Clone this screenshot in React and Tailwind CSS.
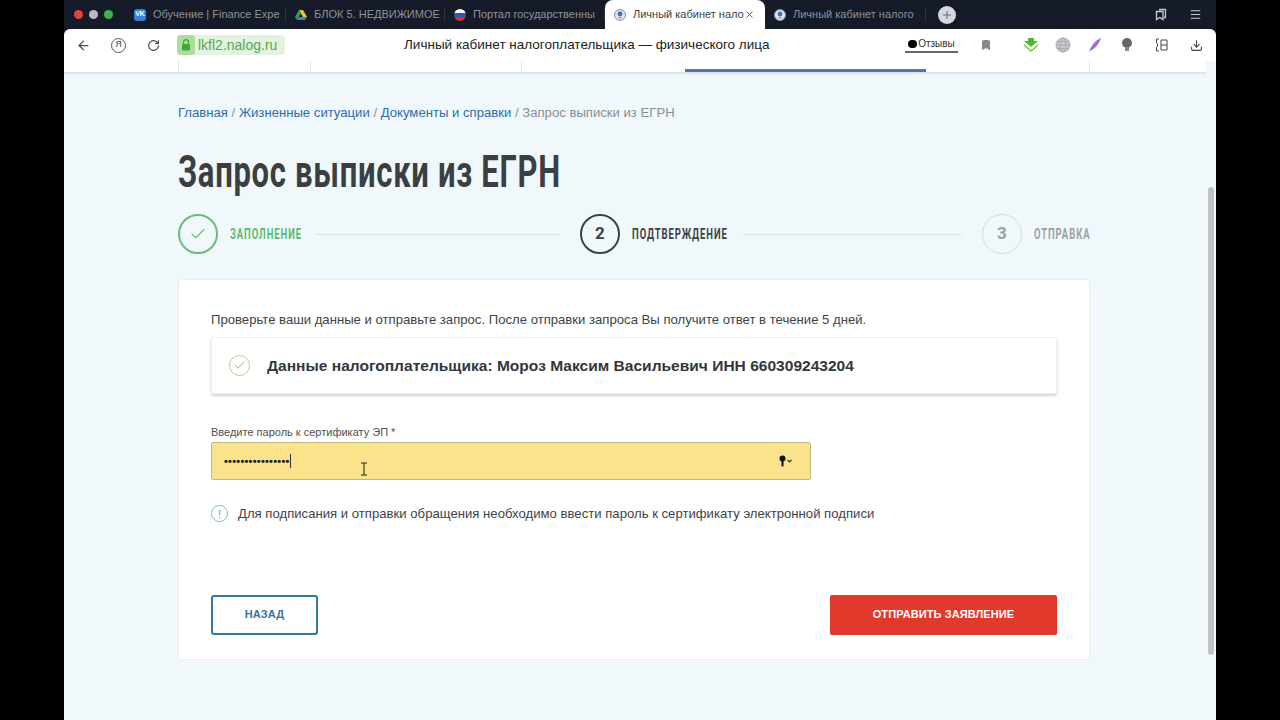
import React from 'react';
import { ArrowLeft, RotateCw, X, Plus, Bookmark, Menu, Download, Check } from 'lucide-react';

const SANS = { fontFamily: '"Liberation Sans", Arial, sans-serif' };
const COND = { fontFamily: 'Roboto, sans-serif' };

const Tab = ({ icon, title, width }) => (
  <div className={`flex items-center h-full ${width} shrink-0 pl-[9px]`}>
    {icon}
    <span className="ml-[7px] text-[11px] text-[#8d939c] whitespace-nowrap flex-1">{title}</span>
    <span className="w-px h-[14px] bg-[#2c3443]" />
  </div>
);

const NalogIcon = () => (
  <svg width="12" height="12" viewBox="0 0 12 12" className="shrink-0">
    <circle cx="6" cy="6" r="5.5" fill="#dfe6f2" stroke="#7d8fb8" />
    <circle cx="6" cy="5" r="2.4" fill="#4a6fa8" />
    <path d="M3.6 8 L6 10 L8.4 8 Z" fill="#c8a24a" />
  </svg>
);

const Step = ({ children, label, labelClass, line }) => (
  <div className="flex items-center">
    {children}
    <span className={`ml-[12px] text-[15px] font-bold whitespace-nowrap origin-left scale-x-[.63] tracking-[1.5px] ${labelClass}`} style={COND}>{label}</span>
    {line && <div className="flex-1 h-px bg-[#dbe3e8] ml-[15px] mr-[20px]" />}
  </div>
);

const App = () => {
  return (
    <div className="w-[1280px] h-[720px] bg-black overflow-hidden flex justify-center" style={SANS}>
      <div className="w-[1152px] h-full flex flex-col bg-[#f0f8fb]">
        {/* Tabs */}
        <div className="h-[29px] bg-[#151b28] flex items-center shrink-0">
          <div className="flex items-center gap-[6px] pl-[10px] w-[61px] shrink-0">
            <span className="w-[9px] h-[9px] rounded-full bg-[#e0453c]" />
            <span className="w-[9px] h-[9px] rounded-full bg-[#b9bcc2]" />
            <span className="w-[9px] h-[9px] rounded-full bg-[#3fb24a]" />
          </div>
          <Tab
            width="w-[161px]"
            title="Обучение | Finance Expe"
            icon={<span className="w-[12px] h-[12px] rounded-[3px] bg-[#3b7fd9] text-white text-[7px] font-bold flex items-center justify-center shrink-0">VK</span>}
          />
          <Tab
            width="w-[159px]"
            title="БЛОК 5. НЕДВИЖИМОЕ"
            icon={
              <svg width="12" height="12" viewBox="0 0 12 12" className="shrink-0">
                <path d="M4 1h4l4 7H8z" fill="#f4c430" />
                <path d="M4 1L0 8l2 3 4-7z" fill="#2f9e57" />
                <path d="M2 11h8l2-3H4z" fill="#3b7fd9" />
              </svg>
            }
          />
          <Tab
            width="w-[160px]"
            title="Портал государственны"
            icon={
              <span className="w-[12px] h-[12px] rounded-full overflow-hidden flex flex-col shrink-0">
                <span className="h-[4px] bg-white" />
                <span className="h-[4px] bg-[#2f55b5]" />
                <span className="h-[4px] bg-[#d6322c]" />
              </span>
            }
          />
          <div className="w-[160px] h-full bg-white rounded-t-[8px] flex items-center pl-[9px] pr-[8px] shrink-0">
            <NalogIcon />
            <span className="ml-[7px] text-[11px] text-[#3a3f47] whitespace-nowrap flex-1">Личный кабинет нало</span>
            <X size={11} className="text-[#555] shrink-0 mr-[2px]" />
          </div>
          <Tab width="w-[161px]" title="Личный кабинет налого" icon={<NalogIcon />} />
          <span className="w-[18px] h-[18px] rounded-full bg-[#d5d9df] flex items-center justify-center ml-[12px] shrink-0">
            <Plus size={12} className="text-[#5f6670]" />
          </span>
          <div className="ml-auto flex items-center gap-[22px] pr-[14px] text-[#c9ced6]">
            <svg width="12" height="13" viewBox="0 0 12 13" fill="none" stroke="currentColor" strokeWidth="1.3">
              <path d="M4 1.5h6.5v8H9M1.5 3.5h6.5v8l-3.2-2-3.3 2z" />
            </svg>
            <Menu size={13} />
          </div>
        </div>

        {/* Toolbar */}
        <div className="bg-[#151b28] shrink-0 relative z-10">
          <div className="h-[32px] bg-white rounded-t-[6px] flex items-center">
            <ArrowLeft size={15} className="ml-[12px] text-[#4a4a4a] shrink-0" />
            <span className="ml-[20px] w-[15px] h-[15px] rounded-full border border-[#555] text-[9px] text-[#444] flex items-center justify-center shrink-0">Я</span>
            <RotateCw size={13} className="ml-[21px] text-[#444] shrink-0" />
            <div className="ml-[17px] h-[20px] w-[108px] rounded-[4px] bg-[#e4f3e0] flex items-center shrink-0">
              <span className="w-[18px] h-[20px] rounded-[4px] bg-[#a9de9c] flex items-center justify-center">
                <svg width="10" height="12" viewBox="0 0 10 12">
                  <path d="M2.5 5V3.2a2.5 2.5 0 0 1 5 0V5" fill="none" stroke="#3fa83a" strokeWidth="1.2" />
                  <rect x="1" y="5" width="8" height="6.5" rx="1" fill="#3fa83a" />
                </svg>
              </span>
              <span className="ml-[3px] text-[14px] text-[#5aa653]">lkfl2.nalog.ru</span>
            </div>
            <span className="ml-[119px] w-[370px] text-[13.5px] text-[#222] whitespace-nowrap shrink-0">Личный кабинет налогоплательщика — физического лица</span>
            <div className="ml-[131px] flex flex-col items-center shrink-0">
              <span className="text-[10px] leading-[13px] text-[#333] flex items-center gap-[1px]">
                <span className="w-[9px] h-[8px] rounded-full bg-black" />
                Отзывы
              </span>
              <span className="w-[53px] h-[2px] bg-[#666] mt-[1px]" />
            </div>
            <Bookmark size={12} className="ml-[22px] text-[#8a8a8a] shrink-0" fill="#8a8a8a" />
            <svg width="16" height="16" viewBox="0 0 16 16" className="ml-[31px] shrink-0">
              <path d="M5 1h6v3l4 0-7 6-7-6h4z" fill="#4fb82e" />
              <path d="M1 7l7 6 7-6v2l-7 6-7-6z" fill="#7ed321" />
            </svg>
            <svg width="16" height="16" viewBox="0 0 16 16" className="ml-[16px] shrink-0" fill="none" stroke="#a9adb2">
              <circle cx="8" cy="8" r="7" fill="#c4c7cb" />
              <ellipse cx="8" cy="8" rx="3" ry="7" />
              <path d="M1 8h14M2 4.5h12M2 11.5h12" />
            </svg>
            <svg width="14" height="16" viewBox="0 0 14 16" className="ml-[17px] shrink-0">
              <path d="M1 15C3 9 7 3 13 1 11 7 7 12 2 14z" fill="#a66bd6" />
            </svg>
            <svg width="12" height="16" viewBox="0 0 12 16" className="ml-[19px] shrink-0">
              <circle cx="6" cy="6" r="5" fill="#666" />
              <rect x="4" y="10" width="4" height="4" fill="#888" />
            </svg>
            <svg width="15" height="16" viewBox="0 0 15 16" fill="none" stroke="#444" strokeWidth="1" className="ml-[21px] shrink-0">
              <path d="M5 2H2.5v4c1.5 0 1.5 4 0 4v4H5M7 3h6v10H7zM7 8h6" />
            </svg>
            <Download size={13} className="ml-[21px] text-[#444] shrink-0" />
          </div>
        </div>

        <div className="flex-1 flex min-h-0">
          {/* Page */}
          <div className="flex-1 flex flex-col min-w-0">
            {/* Site nav strip */}
            <div className="h-[11px] bg-white shadow-[0_1px_3px_rgba(0,0,0,0.15)] flex shrink-0">
              <div className="w-[115px] h-full border-r border-[#e8e8e8]" />
              <div className="w-[132px] h-full border-r border-[#e8e8e8]" />
              <div className="w-[211px] h-full border-r border-[#e8e8e8]" />
              <div className="w-[163px] h-full" />
              <div className="w-[241px] h-full flex items-end">
                <div className="w-full h-[3px] bg-[#4a78b5]" />
              </div>
              <div className="w-[164px] h-full border-r border-[#e8e8e8]" />
            </div>

            <div className="pl-[114px] pr-[116px] flex flex-col">
              <div className="mt-[33px] text-[13.13px] leading-[16px] text-[#8a8f94] whitespace-nowrap">
                <span className="text-[#2f6da8]">Главная</span> / <span className="text-[#2f6da8]">Жизненные ситуации</span> / <span className="text-[#2f6da8]">Документы и справки</span> / Запрос выписки из ЕГРН
              </div>

              <h1 className="mt-[29px] h-[44px] text-[44px] leading-[44px] font-bold text-[#3c3f42] whitespace-nowrap origin-left scale-x-[.705] tracking-[1px]" style={COND}>
                Запрос выписки из ЕГРН
              </h1>

              {/* Steps */}
              <div className="mt-[20px] grid grid-cols-[402px_402px_108px] items-center h-[40px]">
                <Step label="ЗАПОЛНЕНИЕ" labelClass="text-[#5cb870] w-[71px]" line>
                  <span className="w-[40px] h-[40px] rounded-full border-2 border-[#6cbb7d] flex items-center justify-center shrink-0">
                    <Check size={18} className="text-[#6cbb7d]" strokeWidth={1.5} />
                  </span>
                </Step>
                <Step label="ПОДТВЕРЖДЕНИЕ" labelClass="text-[#3c4247] w-[96px]" line>
                  <span className="w-[40px] h-[40px] rounded-full border-2 border-[#3c4247] flex items-center justify-center text-[#3c4247] text-[17px] font-bold shrink-0" style={COND}>2</span>
                </Step>
                <Step label="ОТПРАВКА" labelClass="text-[#9ba1a6] w-[56px]">
                  <span className="w-[40px] h-[40px] rounded-full border border-[#d5dade] flex items-center justify-center text-[#9ba1a6] text-[17px] font-bold shrink-0" style={COND}>3</span>
                </Step>
              </div>

              {/* Card */}
              <div className="mt-[25px] h-[381px] bg-white border border-[#e8eef1] rounded-[3px] px-[32px] flex flex-col">
                <p className="mt-[32px] text-[13.13px] leading-[16px] text-[#3f4347] whitespace-nowrap">
                  Проверьте ваши данные и отправьте запрос. После отправки запроса Вы получите ответ в течение 5 дней.
                </p>

                <div className="mt-[9px] h-[57px] border border-[#eef0f2] rounded-[2px] shadow-[0_2px_3px_rgba(0,0,0,0.18)] flex items-center pl-[17px]">
                  <span className="w-[21px] h-[21px] rounded-full border border-[#a8d48e] flex items-center justify-center shrink-0">
                    <Check size={13} className="text-[#6cb84a]" strokeWidth={1.6} />
                  </span>
                  <span className="ml-[17px] text-[15.55px] font-bold text-[#33373b] whitespace-nowrap">
                    Данные налогоплательщика: Мороз Максим Васильевич ИНН 660309243204
                  </span>
                </div>

                <label className="mt-[31px] text-[11px] leading-[15px] text-[#4c5055]">Введите пароль к сертификату ЭП *</label>

                <div className="mt-[2px] w-[600px] h-[38px] bg-[#fae38a] border border-[#b9b98c] rounded-[2px] flex items-center pl-[12px] pr-[17px]">
                  <span className="text-[11px] font-bold tracking-[0.25px] text-[#222] leading-none">••••••••••••••••</span>
                  <span className="w-px h-[14px] bg-[#333]" />
                  <svg width="14" height="14" viewBox="0 0 14 14" className="ml-auto">
                    <circle cx="3.5" cy="4.5" r="3" fill="#111" />
                    <rect x="2.5" y="6" width="2" height="6.5" fill="#111" />
                    <path d="M8.5 6l2 2 2-2" fill="none" stroke="#333" strokeWidth="1.2" />
                  </svg>
                </div>

                <div className="mt-[24px] flex items-center">
                  <span className="w-[17px] h-[17px] rounded-full border border-[#7fb5d6] text-[#5f8fb0] text-[11px] flex items-center justify-center shrink-0">!</span>
                  <span className="ml-[10px] text-[13.15px] text-[#3f4347] whitespace-nowrap">
                    Для подписания и отправки обращения необходимо ввести пароль к сертификату электронной подписи
                  </span>
                </div>

                <div className="mt-[71px] flex justify-between">
                  <button className="w-[107px] h-[40px] border-2 border-[#2f7a9e] rounded-[3px] bg-white text-[11px] font-bold text-[#3573a0] tracking-[0.1px]">НАЗАД</button>
                  <button className="w-[227px] h-[40px] rounded-[2px] bg-[#e1392c] text-[11px] font-bold text-white tracking-[0.1px]">ОТПРАВИТЬ ЗАЯВЛЕНИЕ</button>
                </div>
              </div>
            </div>
          </div>

          {/* Scrollbar */}
          <div className="w-[10px] shrink-0 bg-[#f0f8fb] flex flex-col pt-[126px]">
            <div className="w-[6px] ml-[2px] h-[468px] rounded-full bg-[#bfc3c6]" />
          </div>
        </div>
      </div>

      {/* Text cursor */}
      <svg width="8" height="14" viewBox="0 0 8 14" className="absolute left-[360px] top-[462px]" fill="none" stroke="#222">
        <path d="M1 1h6M4 1v12M1 13h6" />
      </svg>
    </div>
  );
};

export default App;
